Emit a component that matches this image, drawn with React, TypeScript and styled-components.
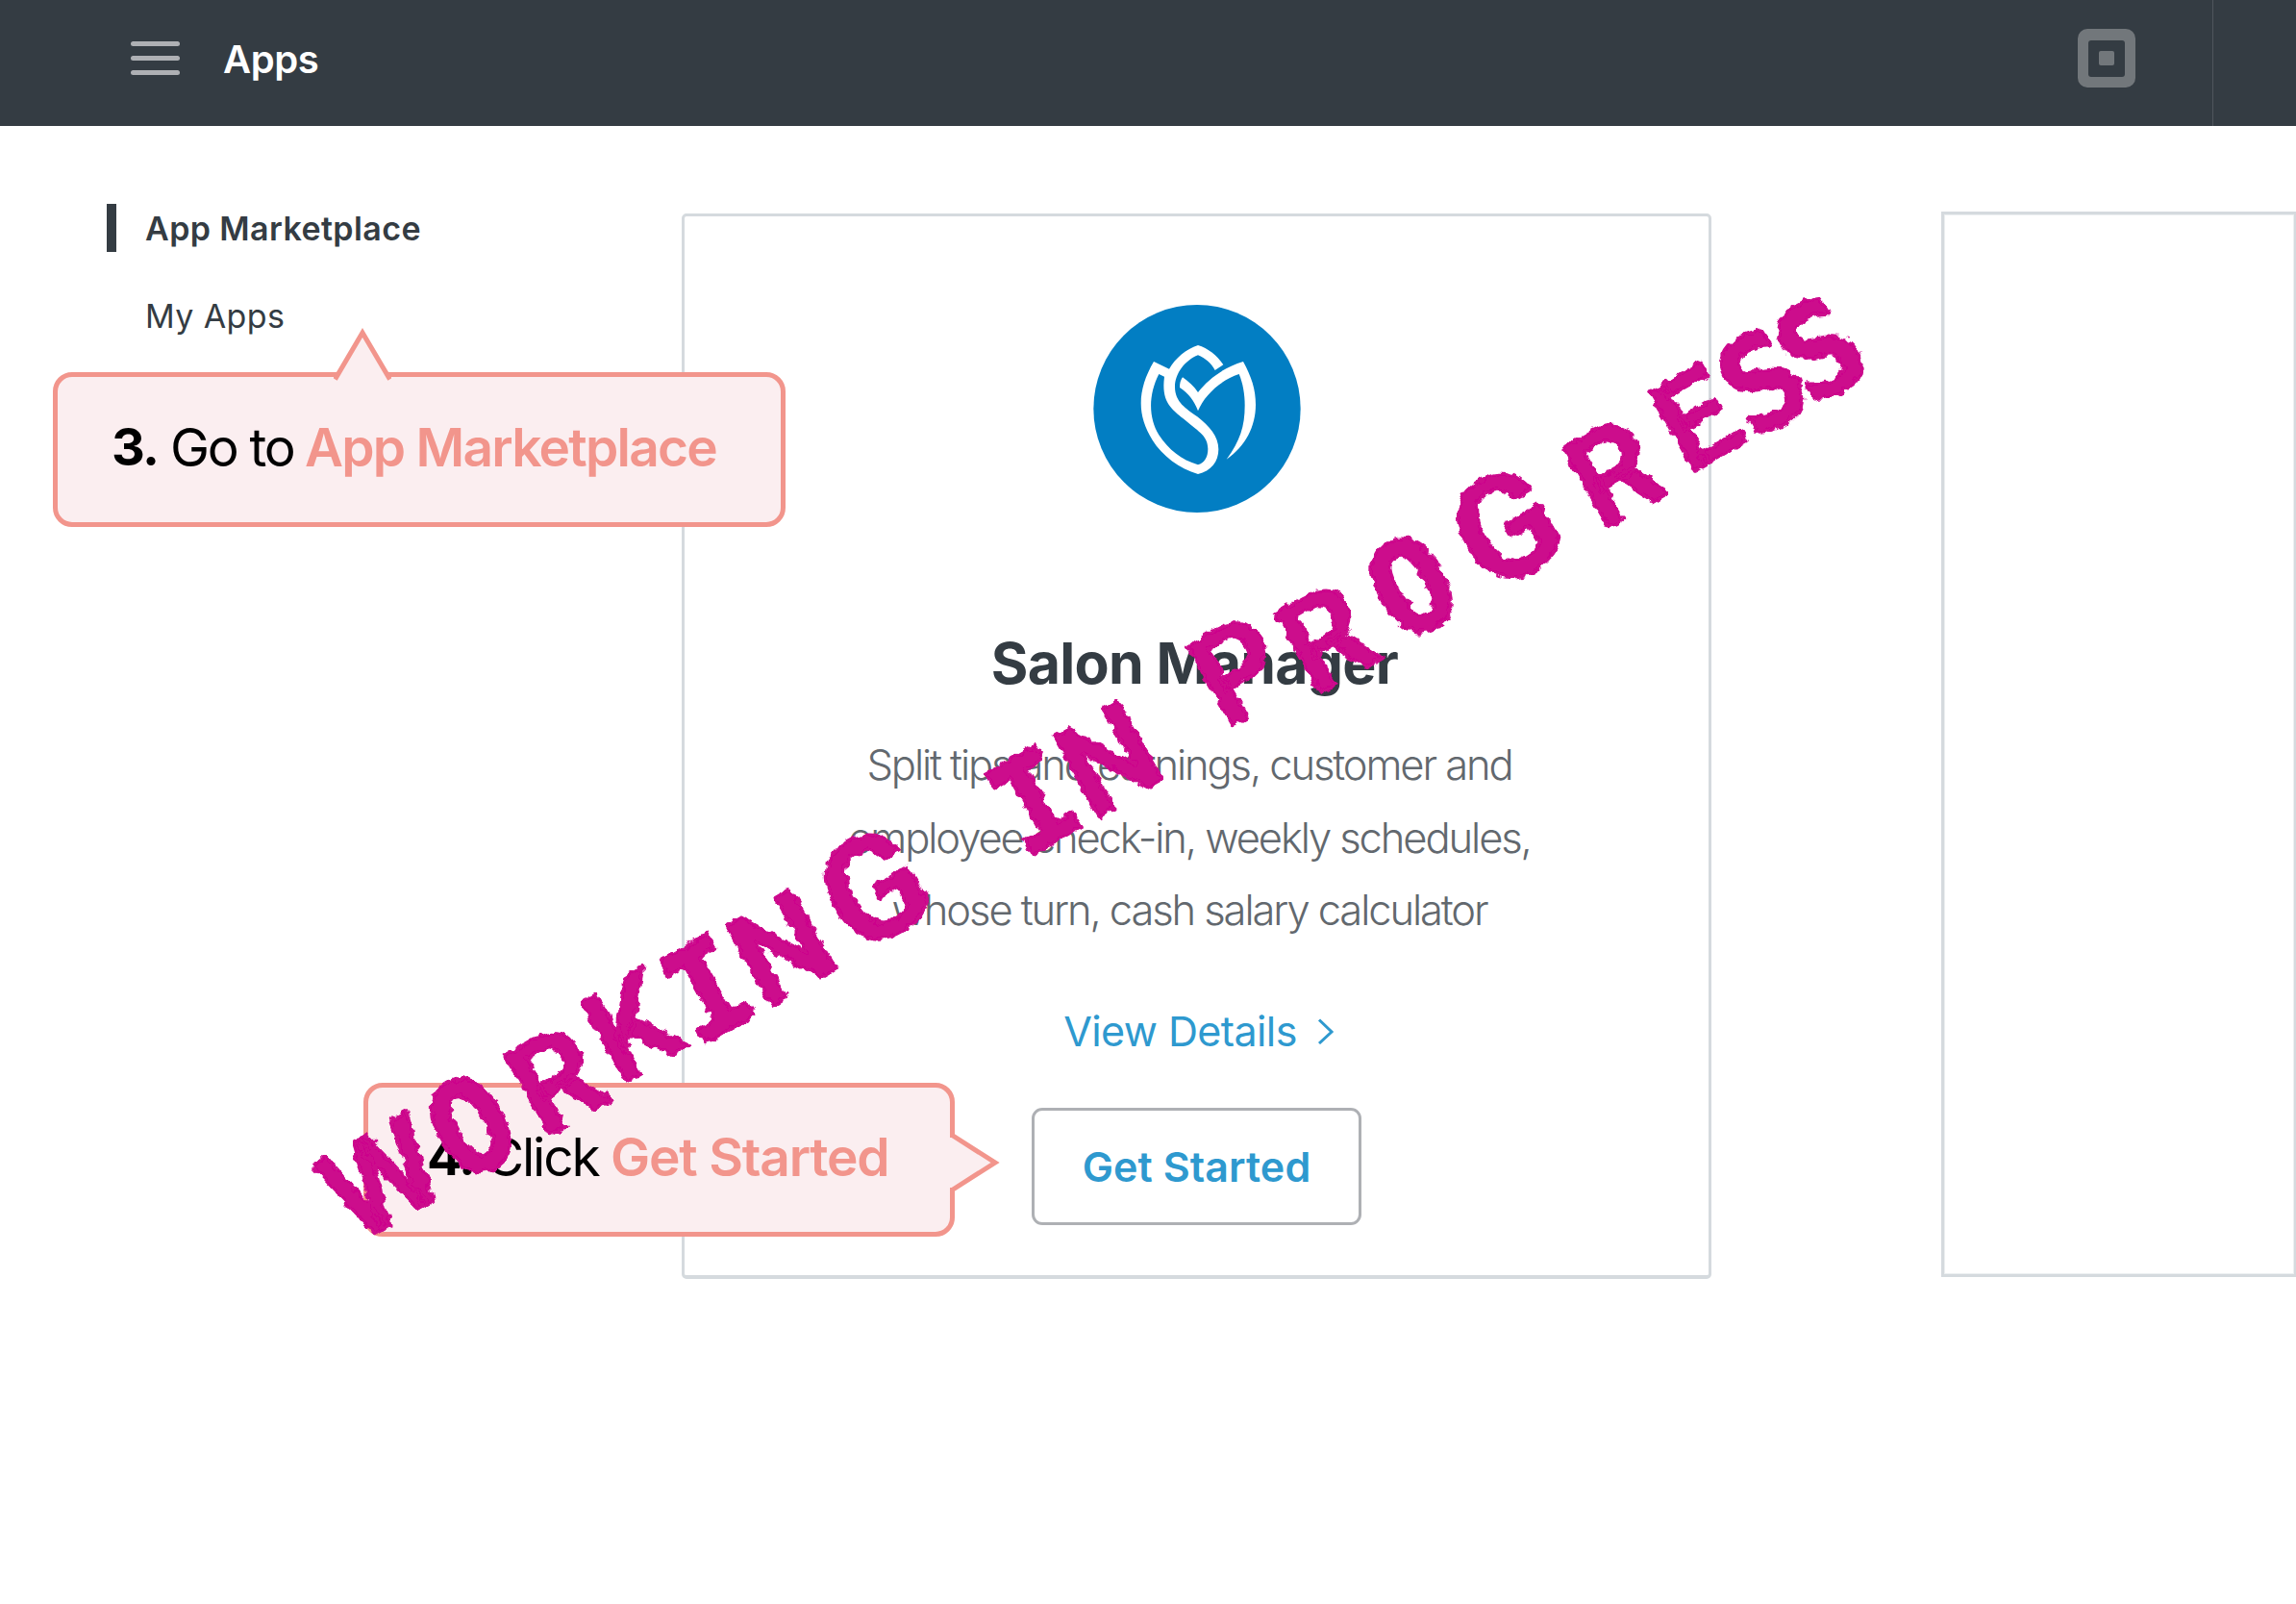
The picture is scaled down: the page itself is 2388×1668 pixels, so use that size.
import React from "react";
import styled, { createGlobalStyle } from "styled-components";

const slate = "#343c43";
const blue = "#2e99cf";
const coral = "#f2958c";
const blush = "#fbeef0";
const line = "#d5dade";
const magenta = "#cc078c";

const GlobalStyle = createGlobalStyle`
  * { box-sizing: border-box; }
  body {
    margin: 0;
    background: #fff;
    font-family: Inter, "Liberation Sans", sans-serif;
    color: ${slate};
  }
`;

const Page = styled.div`
  position: relative;
  display: flex;
  flex-direction: column;
  width: 2388px;
  height: 1668px;
  overflow: hidden;
`;

const Header = styled.header`
  display: flex;
  align-items: stretch;
  height: 131px;
  background: ${slate};
`;

const HeaderMain = styled.div`
  flex: 1;
  display: flex;
  align-items: center;
  padding: 0 80px 10px 136px;
`;

const MenuButton = styled.div`
  display: flex;
  flex-direction: column;
  gap: 10px;
  width: 51px;
  margin-right: 45px;
`;

const MenuBar = styled.span`
  height: 5px;
  border-radius: 2.5px;
  background: #aeb0b4;
`;

const HeaderTitle = styled.h1`
  flex: 1;
  margin: 0;
  padding-top: 3px;
  font-size: 40px;
  line-height: 50px;
  font-weight: 600;
  letter-spacing: -0.4px;
  color: #fff;
`;

const HeaderAside = styled.div`
  width: 87px;
  border-left: 1px solid #4f565c;
`;

const Body = styled.main`
  flex: 1;
  display: grid;
  grid-template-columns: 709px 1071px 1fr;
  align-items: start;
`;

const Sidebar = styled.nav`
  display: flex;
  flex-direction: column;
  gap: 41px;
  padding: 81px 0 0 111px;
`;

const NavItem = styled.a<{ $active?: boolean }>`
  height: 50px;
  padding-left: 30px;
  border-left: 10px solid ${(p) => (p.$active ? slate : "transparent")};
  font-size: 34px;
  line-height: 52px;
  font-weight: ${(p) => (p.$active ? 600 : 400)};
  letter-spacing: 0.4px;
`;

const Card = styled.section`
  display: flex;
  flex-direction: column;
  align-items: center;
  height: 1108px;
  margin-top: 91px;
  padding-top: 92px;
  border: 3px solid ${line};
  border-bottom-width: 4px;
  border-radius: 5px;
`;

const NextCard = styled.section`
  height: 1108px;
  margin: 89px 0 0 239px;
  border: 3px solid ${line};
  border-right-width: 2px;
  box-shadow: inset 0 0 0 1px #eceff1;
`;

const AppName = styled.h2`
  margin: 121px 0 32px;
  padding-right: 4px;
  font-size: 59px;
  line-height: 72px;
  font-weight: 700;
  letter-spacing: -0.7px;
`;

const Description = styled.p`
  margin: 0;
  padding-right: 15px;
  text-align: center;
  white-space: pre-line;
  font-size: 43.5px;
  line-height: 75.5px;
  font-weight: 300;
  letter-spacing: -2.1px;
  color: #62686e;
`;

const DetailsLink = styled.a`
  display: flex;
  align-items: center;
  gap: 21px;
  margin: 61px 0 54px;
  padding-left: 5px;
  font-size: 43px;
  line-height: 52px;
  letter-spacing: -0.6px;
  color: ${blue};
`;

const StartButton = styled.button`
  width: 343px;
  height: 122px;
  padding: 0;
  border: 3px solid #aeb0b4;
  border-radius: 11px;
  background: #fff;
  font: 600 43px/52px Inter, "Liberation Sans", sans-serif;
  letter-spacing: 0.1px;
  color: ${blue};
`;

const Callout = styled.aside<{
  $left: number;
  $top: number;
  $width: number;
  $height: number;
  $indent: number;
}>`
  position: absolute;
  left: ${(p) => p.$left}px;
  top: ${(p) => p.$top}px;
  display: flex;
  align-items: center;
  width: ${(p) => p.$width}px;
  height: ${(p) => p.$height}px;
  padding: 0 0 6px ${(p) => p.$indent}px;
  border: 5px solid ${coral};
  border-radius: 20px;
  background: ${blush};
  font-size: 55px;
  line-height: 66px;
  white-space: nowrap;
  color: #000;
`;

const StepNumber = styled.b`
  width: 61px;
  font-size: 54px;
  letter-spacing: -1.6px;
`;

const StepVerb = styled.span<{ $width: number; $tracking: number }>`
  width: ${(p) => p.$width}px;
  letter-spacing: ${(p) => p.$tracking}px;
`;

const StepTarget = styled.strong<{ $tracking: number }>`
  font-weight: 600;
  letter-spacing: ${(p) => p.$tracking}px;
  color: ${coral};
`;

const Pointer = styled.svg<{ $x: number; $y: number }>`
  position: absolute;
  left: ${(p) => p.$x}px;
  top: ${(p) => p.$y}px;
  fill: ${blush};
  stroke: ${coral};
  stroke-width: 5;
`;

const Scrawl = styled.svg`
  position: absolute;
  inset: 0;
  pointer-events: none;
`;

const ScrawlText = styled.text`
  font-family: Roboto, "Liberation Sans", sans-serif;
  font-size: 134px;
  font-weight: 600;
  text-anchor: middle;
  fill: ${magenta};
  stroke: ${magenta};
  stroke-width: 3;
  stroke-linejoin: round;
`;

const Narrow = styled.tspan`
  font-family: "DejaVu Sans Mono", monospace;
`;

const Wide = styled.tspan`
  font-size: 150px;
`;

const SquareLogo = () => (
  <svg width="60" height="61" viewBox="0 0 60 61">
    <rect width="60" height="61" rx="10" fill="#72777b" />
    <rect x="11" y="12" width="38" height="38" rx="3" fill={slate} />
    <rect x="22" y="23" width="16" height="15" rx="2" fill="#72777b" />
  </svg>
);

const TulipLogo = () => (
  <svg width="216" height="216" viewBox="111 81 646 648">
    <ellipse cx="434" cy="405" rx="323" ry="324" fill="#027ec3" />
    <path
      fill="#fff"
      fillRule="evenodd"
      d="M437 207C468 216 498 240 516 268L490 285C478 262 460 248 437 238C397 254 365 295 365 337C365 385 400 405 435 430C472 460 501 490 501 532C501 570 478 600 437 609C380 592 325 552 295 503C245 425 248 345 299 258L347 281C367 247 400 219 437 207ZM332 305L315 297C283 360 281 430 315 487C345 533 385 565 437 580C456 574 468 558 468 530C468 490 440 477 400 443C352 405 322 385 332 305Z"
    />
    <path
      fill="#fff"
      d="M389 307C408 320 425 336 437 354C470 311 520 275 578 258C604 305 617 345 617 392C617 460 585 522 526 563C568 505 583 460 583 395C583 360 577 325 565 297C510 315 457 362 437 412C427 383 406 355 380 339Q380 318 389 307Z"
    />
  </svg>
);

export default function App() {
  return (
    <Page>
      <GlobalStyle />
      <Header>
        <HeaderMain>
          <MenuButton>
            <MenuBar />
            <MenuBar />
            <MenuBar />
          </MenuButton>
          <HeaderTitle>Apps</HeaderTitle>
          <SquareLogo />
        </HeaderMain>
        <HeaderAside />
      </Header>

      <Body>
        <Sidebar>
          <NavItem $active>App Marketplace</NavItem>
          <NavItem>My Apps</NavItem>
        </Sidebar>
        <Card>
          <TulipLogo />
          <AppName>Salon Manager</AppName>
          <Description>
            {"Split tips and earnings, customer and\nemployee check-in, weekly schedules,\nwhose turn, cash salary calculator"}
          </Description>
          <DetailsLink>
            View Details
            <svg width="18" height="28" viewBox="0 0 18 28" fill="none" stroke={blue} strokeWidth="3">
              <path d="M2 2.5L15 15L2 27" />
            </svg>
          </DetailsLink>
          <StartButton>Get Started</StartButton>
        </Card>
        <NextCard />
      </Body>

      <Callout $left={55} $top={387} $width={762} $height={161} $indent={56}>
        <Pointer $x={287} $y={-52} width="60" height="58" viewBox="-2 0 60 58">
          <path stroke="none" d="M1 58V51L28 6L55 51V58Z" />
          <path fill="none" d="M-0.5 54.5L28 6L56.5 54.5" />
        </Pointer>
        <StepNumber>3.</StepNumber>
        <StepVerb $width={140} $tracking={-2.3}>Go to</StepVerb>
        <StepTarget $tracking={-1.75}>App Marketplace</StepTarget>
      </Callout>

      <Callout $left={378} $top={1126} $width={615} $height={160} $indent={61}>
        <Pointer $x={604} $y={48} width="58" height="60" viewBox="0 0 58 60">
          <path stroke="none" d="M0 4H7L48 30L7 56H0Z" />
          <path fill="none" d="M4 2L48 30L4 58" />
        </Pointer>
        <StepNumber>4.</StepNumber>
        <StepVerb $width={130} $tracking={-2.2}>Click</StepVerb>
        <StepTarget $tracking={-1.2}>Get Started</StepTarget>
      </Callout>

      <Scrawl width="2388" height="1668" viewBox="0 0 2388 1668">
        <defs>
          <filter id="chalk" x="-5%" y="-10%" width="110%" height="120%">
            <feTurbulence type="fractalNoise" baseFrequency="0.1" numOctaves="2" seed="4" result="noise" />
            <feDisplacementMap in="SourceGraphic" in2="noise" scale="10" xChannelSelector="R" yChannelSelector="G" />
          </filter>
        </defs>
        <g filter="url(#chalk)">
          <ScrawlText
            transform="translate(388 1218) rotate(-30)"
            y="58 58 60 51 58 58 58 52 58 58 58 46 62 61 61 63 57 59 60"
            x="4 112 212 308 396 484 598 690 788 877 950 1040 1136 1240 1355 1481 1583 1662 1731"
          >
            W<Narrow>O</Narrow>RK<Narrow>I</Narrow>N<Wide>G</Wide> <Narrow>I</Narrow>N PR<Narrow>O</Narrow>
            <Wide>G</Wide>RE<Narrow>SS</Narrow>
          </ScrawlText>
        </g>
      </Scrawl>
    </Page>
  );
}
